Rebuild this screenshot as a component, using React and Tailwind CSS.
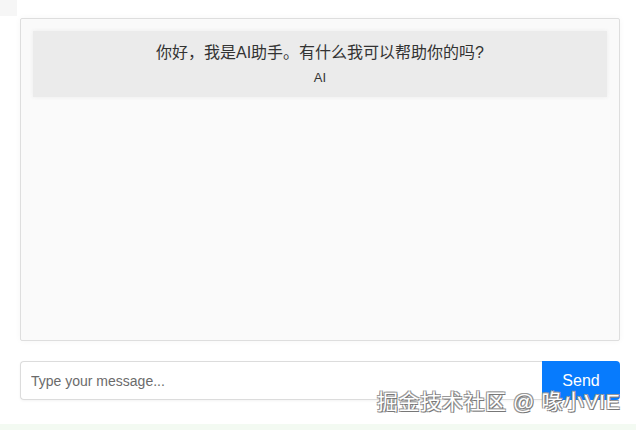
export default function App() {
  return (
    <div className="relative h-[430px] w-[636px] overflow-hidden bg-white font-['Liberation_Sans','Noto_Sans_CJK_SC',sans-serif]">
      <div className="absolute left-0 top-0 h-[16px] w-[17px] bg-[#f6f6f6]" />
      <div className="flex flex-col gap-[20px] pl-[20px] pr-[16px] pt-[18px]">
        <div className="h-[323px] rounded-[2px] border border-[#dedede] bg-[#fafafa] p-[12px] shadow-[0_0_6px_rgba(0,0,0,0.04)]">
          <div className="flex h-[66px] flex-col items-center bg-[#ebebeb] pt-[10px] shadow-[0_0_4px_#ebebeb]">
            <p className="text-[16px] leading-[24px] text-[#333]">你好，我是AI助手。有什么我可以帮助你的吗?</p>
            <p className="mt-[4px] text-[13px] leading-[18px] text-[#333]">AI</p>
          </div>
        </div>
        <div className="flex h-[39px]">
          <input
            className="h-full flex-1 rounded-l-[4px] border border-r-0 border-[#dcdcdc] bg-white px-[10px] text-[14px] text-[#555] placeholder:text-[#6b6b6b] shadow-[0_1px_3px_rgba(0,0,0,0.05)] outline-none"
            placeholder="Type your message..."
          />
          <button className="h-full w-[78px] rounded-r-[4px] bg-[#077bfd] text-[16px] text-white">Send</button>
        </div>
      </div>
      <div className="absolute bottom-0 left-0 h-[6px] w-full bg-[#f3faf2]" />
      <div className="absolute left-[377px] top-[389px] text-[21px] leading-[26px] tracking-[0.6px] text-white [text-shadow:1px_1px_0_#777,-1px_-1px_0_#999,1px_-1px_0_#999,-1px_1px_0_#999]">
        掘金技术社区 @ 喙小VIE
      </div>
    </div>
  )
}
